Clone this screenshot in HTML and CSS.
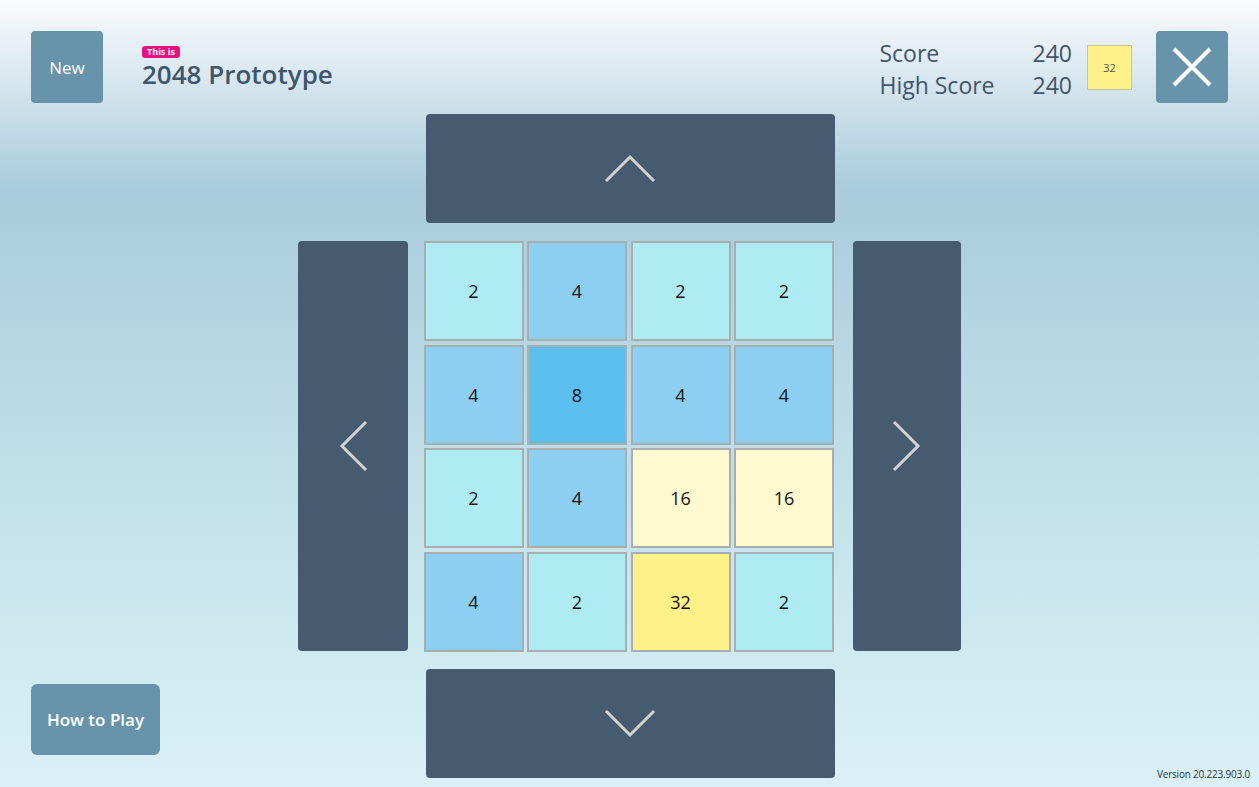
FILE: index.html
```html
<!DOCTYPE html>
<html lang="en">
<head>
    <meta charset="UTF-8">
    <meta name="viewport" content="width=device-width, initial-scale=1.0">
    <title>2048 Prototype</title>
    <link rel="stylesheet" href="styles.css">
</head>
<body>
    <div class="header">
        <button class="tool-btn">New</button>
        <div class="title">
            <span class="badge">This is</span>
            <h1>2048 Prototype</h1>
        </div>
        <div class="scores">
            <span>Score</span><span class="value">240</span>
            <span>High Score</span><span class="value">240</span>
        </div>
        <div class="best-tile">32</div>
        <button class="tool-btn close">
            <svg width="40" height="40" viewBox="0 0 40 40">
                <path d="M2 2 L38 38 M38 2 L2 38" stroke="#fff" stroke-width="4" fill="none"/>
            </svg>
        </button>
    </div>

    <div class="main">
        <div class="side left-side">
            <button class="tool-btn how">How to Play</button>
        </div>

        <div class="board">
            <button class="move up">
                <svg width="52" height="30" viewBox="0 0 52 30"><polyline points="2,28 26,4 50,28" /></svg>
            </button>
            <button class="move left">
                <svg width="30" height="52" viewBox="0 0 30 52"><polyline points="28,2 4,26 28,50" /></svg>
            </button>
            <div class="grid">
                <div class="tile t2">2</div>
                <div class="tile t4">4</div>
                <div class="tile t2">2</div>
                <div class="tile t2">2</div>

                <div class="tile t4">4</div>
                <div class="tile t8">8</div>
                <div class="tile t4">4</div>
                <div class="tile t4">4</div>

                <div class="tile t2">2</div>
                <div class="tile t4">4</div>
                <div class="tile t16">16</div>
                <div class="tile t16">16</div>

                <div class="tile t4">4</div>
                <div class="tile t2">2</div>
                <div class="tile t32">32</div>
                <div class="tile t2">2</div>
            </div>
            <button class="move right">
                <svg width="30" height="52" viewBox="0 0 30 52"><polyline points="2,2 26,26 2,50" /></svg>
            </button>
            <button class="move down">
                <svg width="52" height="30" viewBox="0 0 52 30"><polyline points="2,2 26,26 50,2" /></svg>
            </button>
        </div>

        <div class="side right-side">
            <span class="version">Version 20.223.903.0</span>
        </div>
    </div>
</body>
</html>
```

FILE: styles.css
```css
body {
    margin: 0;
    height: 787px;
    overflow: hidden;
    font-family: 'Open Sans', 'Noto Sans', sans-serif;
    color: #3f566b;
    background: linear-gradient(to bottom, #fafbfc 0%, #a9cbdd 24%, #c3e1ea 62%, #d9f1f6 100%);
    display: flex;
    flex-direction: column;
}
button {
    font-family: inherit;
    border: none;
    cursor: pointer;
    padding: 0;
}

/* top bar */
.header {
    display: flex;
    align-items: center;
    padding: 31px 31px 0 31px;
    height: 72px;
}
.tool-btn {
    background-color: #6794ab;
    color: #fff;
    border-radius: 4px;
    width: 72px;
    height: 72px;
    font-size: 17px;
    display: flex;
    align-items: center;
    justify-content: center;
}
.title {
    margin-left: 39px;
    display: flex;
    flex-direction: column;
    align-items: flex-start;
    margin-top: 2px;
}
.badge {
    background-color: #e3137f;
    color: #fff;
    font-size: 9px;
    font-weight: 700;
    line-height: 12px;
    padding: 0 5px;
    border-radius: 3px;
    margin-bottom: 1px;
}
h1 {
    margin: 0;
    font-size: 26px;
    font-weight: 600;
    line-height: 31px;
    color: #3f566b;
}
.scores {
    margin-left: auto;
    display: grid;
    grid-template-columns: auto auto;
    column-gap: 38px;
    font-size: 23px;
    line-height: 32px;
    margin-top: 4px;
}
.scores .value {
    text-align: right;
}
.best-tile {
    width: 43px;
    height: 43px;
    margin-left: 15px;
    border: 1px solid #c9c59a;
    background-color: #fff18a;
    color: #555;
    font-size: 11px;
    display: flex;
    align-items: center;
    justify-content: center;
}
.close {
    margin-left: 24px;
}

/* play area */
.main {
    flex: 1;
    display: grid;
    grid-template-columns: 1fr auto 1fr;
    margin-top: 11px;
}
.side {
    display: flex;
    align-items: flex-end;
}
.left-side {
    padding: 0 0 32px 31px;
}
.right-side {
    justify-content: flex-end;
    padding: 0 9px 6px 0;
}
.how {
    width: 129px;
    height: 71px;
    font-size: 17px;
    font-weight: 600;
    border-radius: 6px;
}
.version {
    font-size: 10px;
    letter-spacing: -0.2px;
    color: #333;
}

.board {
    display: grid;
    grid-template-columns: 110px 411px 110px;
    grid-template-rows: 109px 410px 109px;
    column-gap: 16px;
    row-gap: 18px;
    margin-left: -1px;
}
.move {
    background-color: #465b6f;
    border-radius: 4px;
    display: flex;
    align-items: center;
    justify-content: center;
}
.move polyline {
    fill: none;
    stroke: #d2d2d2;
    stroke-width: 3;
}
.up {
    grid-column: 2;
    grid-row: 1;
    width: 409px;
    margin-left: 2px;
}
.up svg { margin-top: -2px; }
.down {
    grid-column: 2;
    grid-row: 3;
    width: 409px;
    margin-left: 2px;
}
.left {
    grid-column: 1;
    grid-row: 2;
}
.right {
    grid-column: 3;
    grid-row: 2;
    margin-left: 2px;
}

.grid {
    grid-column: 2;
    grid-row: 2;
    display: grid;
    grid-template-columns: repeat(4, 100px);
    grid-template-rows: repeat(4, 100px);
    gap: 3.5px;
}
.tile {
    box-sizing: border-box;
    border: 2px solid #a9aeb0;
    display: flex;
    align-items: center;
    justify-content: center;
    font-size: 18px;
    color: #111;
}
.t2 { background-color: #aeebf3; }
.t4 { background-color: #8ccff2; }
.t8 { background-color: #5bbff0; }
.t16 { background-color: #fff9cf; }
.t32 { background-color: #fff18a; }
```
